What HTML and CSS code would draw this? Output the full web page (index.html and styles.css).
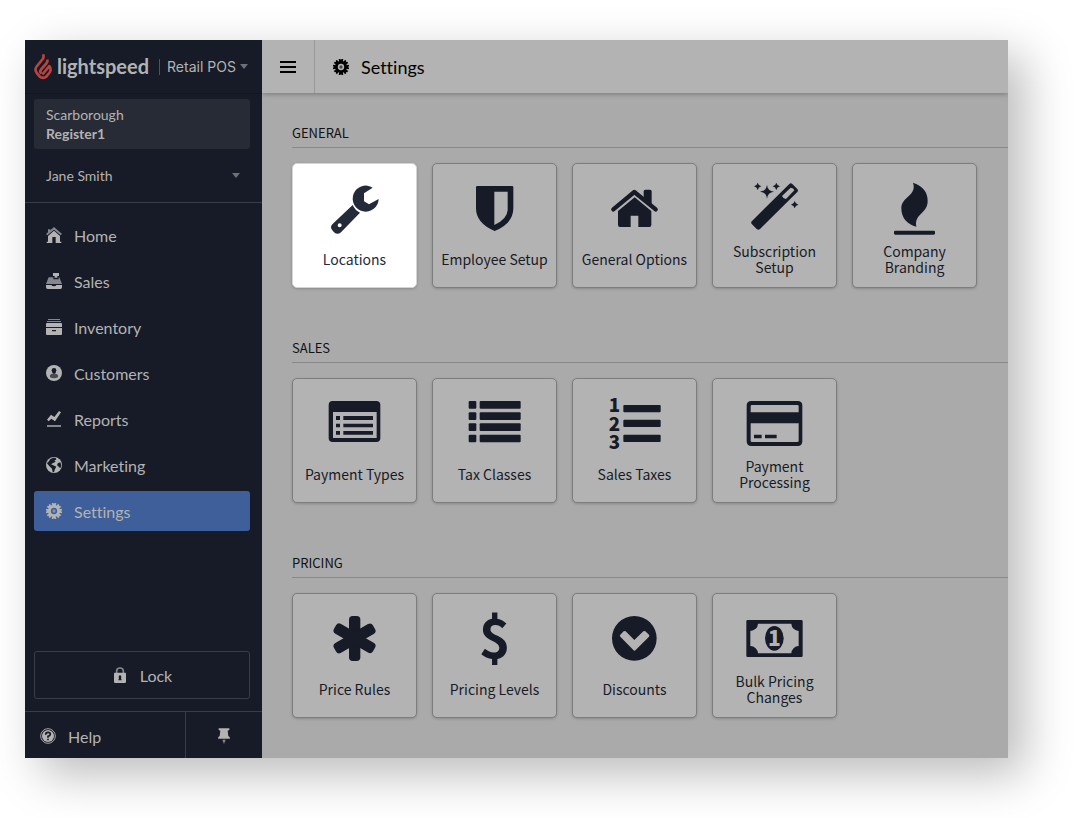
FILE: index.html
```html
<!DOCTYPE html>
<html lang="en">
<head>
<meta charset="utf-8">
<title>Settings</title>
<link rel="stylesheet" href="styles.css">
</head>
<body>
<svg class="defs" aria-hidden="true">
  <symbol id="gear" viewBox="0 0 48 48">
    <circle cx="24" cy="24" r="14" fill="none" stroke="currentColor" stroke-width="9"/>
    <circle cx="24" cy="24" r="5" opacity=".6"/>
    <path d="M19 8L17 0H22L24 3L26 0H31L29 8ZM19 40L17 48H22L24 45L26 48H31L29 40Z"/>
    <path d="M19 8L17 0H22L24 3L26 0H31L29 8ZM19 40L17 48H22L24 45L26 48H31L29 40Z" transform="rotate(45 24 24)"/>
    <path d="M19 8L17 0H22L24 3L26 0H31L29 8ZM19 40L17 48H22L24 45L26 48H31L29 40Z" transform="rotate(90 24 24)"/>
    <path d="M19 8L17 0H22L24 3L26 0H31L29 8ZM19 40L17 48H22L24 45L26 48H31L29 40Z" transform="rotate(135 24 24)"/>
  </symbol>
</svg>
<div class="app">
  <aside class="sidebar">
    <div class="brand">
      <svg class="brand-mark" viewBox="0 0 54 80" aria-hidden="true"><g fill="none" stroke="#b9443f" stroke-width="8" stroke-linejoin="round"><path d="M27 3Q31 12 25 19L8 40Q1 49 8 59L16 69Q27 79 38 69L47 58Q53 48 46 39L25 64"/><path d="M40 19Q42 26 37 31L21 49Q16 55 22 61"/></g></svg>
      <span class="brand-name">lightspeed</span>
      <button class="product" type="button">Retail POS<span class="caret"></span></button>
    </div>
    <div class="register"><span>Scarborough</span><strong>Register1</strong></div>
    <button class="user" type="button">Jane Smith<span class="caret"></span></button>
    <nav class="nav">
      <a href="#"><svg viewBox="0 0 48 48"><path fill="#85878b" d="M24 0L48 21L44 25L24 8L4 25L0 21L6 16V7H13V10Z"/><path d="M24 11L42 27V44H46V48H29V30H19V48H2V44H6V27Z"/></svg>Home</a>
      <a href="#"><svg viewBox="0 0 48 48"><path d="M21 0H39V9H34V14H26V9H21ZM0 36H16Q18 40 24 40T31 36H48V43Q48 48 43 48H5Q0 48 0 43Z"/><path fill="#85878b" d="M8 13H22V19H38V13H40L48 33H0Z"/></svg>Sales</a>
      <a href="#"><svg viewBox="0 0 48 48"><path fill="#85878b" d="M6 0H42V3H6ZM3 6H45V9H3Z"/><path fill-rule="evenodd" d="M3 12H45Q48 12 48 15V24H0V15Q0 12 3 12ZM0 27H48V45Q48 48 45 48H3Q0 48 0 45ZM18 33V37H30V33Z"/></svg>Inventory</a>
      <a href="#"><svg viewBox="0 0 48 48"><circle cx="24" cy="24" r="24"/><path fill="#484b54" d="M12 37Q10 29 15 28L20 26H28L33 28Q38 29 36 37Q24 43 12 37Z"/><path fill="#171b27" d="M24 9Q31 9 31 16Q31 24 24 27Q17 24 17 16Q17 9 24 9Z"/></svg>Customers</a>
      <a href="#"><svg viewBox="0 0 48 48"><path d="M3 26L15 11L25 18L39 0L45 4L27 31L16 23L8 31Z"/><path fill="#85878b" d="M3 42H45V48H3Z"/></svg>Reports</a>
      <a href="#"><svg viewBox="0 0 48 48"><circle cx="24" cy="24" r="24"/><path fill="#171b27" d="M22 2L29 3L31 8L25 10L29 14L20 19L15 22L22 25L31 29L27 36L24 46L20 45L18 35L12 29L5 22L3 18L9 13L12 7ZM36 18L43 16L46 25L43 34L38 29L33 24Z"/></svg>Marketing</a>
      <a href="#" class="active" aria-current="page"><svg><use href="#gear"/></svg>Settings</a>
    </nav>
    <button class="lock" type="button"><svg viewBox="0 0 48 48"><path fill="none" stroke="#85878b" stroke-width="5" d="M14 20V12Q14 3 24 3T34 12V20"/><path fill-rule="evenodd" d="M8 17H40Q42 17 42 20V44Q42 48 38 48H10Q6 48 6 44V20Q6 17 8 17ZM24 25A5 5 0 0 0 21 33L19 40H29L27 33A5 5 0 0 0 24 25"/></svg>Lock</button>
    <div class="sidebar-foot">
      <a class="help" href="#"><svg viewBox="0 0 48 48"><circle cx="24" cy="24" r="22" fill="none" stroke="#a4a5a8" stroke-width="3"/><circle cx="24" cy="24" r="18"/><path fill="none" stroke="#171b27" stroke-width="5" d="M17 20Q17 13 24 13T31 19Q31 23 24 25V29M24 32V37"/></svg>Help</a>
      <button class="pin" type="button" aria-label="Pin menu"><svg viewBox="0 0 48 48"><path d="M8 1H40V6L35 8L37 24Q42 26 42 32H6Q6 26 11 24L13 8L8 6Z"/><path fill="#85878b" d="M19 35H29L24 48Z"/></svg></button>
    </div>
  </aside>
  <div class="main">
    <header class="topbar">
      <button class="menu" type="button" aria-label="Menu"><svg viewBox="0 0 48 48"><path d="M0 6H48V12H0ZM0 21H48V27H0ZM0 36H48V42H0Z"/></svg></button>
      <h1><svg><use href="#gear"/></svg>Settings</h1>
    </header>
    <main class="content">
      <section>
        <h2>GENERAL</h2>
        <div class="cards">
          <a class="card highlight" href="#"><svg viewBox="123 78 171 168"><path fill-rule="evenodd" d="M263 98L237 115V139L252 148L281 132A39 39 0 1 1 263 98ZM203 150Q210 166 225 173L168 232Q158 241 147 232L142 226Q134 216 142 208ZM164 205A6 6 0 1 0 164 217A6 6 0 1 0 164 205"/></svg><span>Locations</span></a>
          <a class="card" href="#"><svg viewBox="543 78 171 168"><path fill-rule="evenodd" d="M577 93H681Q685 93 685 97V160Q685 205 629 228Q573 205 573 160V97Q573 93 577 93ZM628 110V210Q667 192 668 165V110Z"/></svg><span>Employee Setup</span></a>
          <a class="card" href="#"><svg viewBox="123 78 171 168"><path d="M236 109Q236 104 241 104H255Q260 104 260 109V152L236 132ZM209 127L259 168V210Q259 216 253 216H220V182H197V216H165Q159 216 159 210V168Z"/><path fill="none" stroke="#171b27" stroke-width="13" stroke-linecap="round" stroke-linejoin="round" d="M145 163L208 111L272 163"/></svg><span>General Options</span></a>
          <a class="card" href="#"><svg viewBox="543 78 171 168"><path fill-rule="evenodd" d="M673 87Q677 83 682 87L697 102Q701 107 697 111L585 222Q580 227 575 222L561 208Q556 203 561 198ZM677 98L651 123Q655 132 663 132L688 106Q686 99 677 98Z"/><path d="M606 89Q608 108 627 110Q608 112 606 131Q604 112 585 110Q604 108 606 89ZM578 83Q580 92 589 94Q580 96 578 105Q576 96 567 94Q576 92 578 83ZM634 83Q636 92 645 94Q636 96 634 105Q632 96 623 94Q632 92 634 83ZM689 138Q691 147 700 149Q691 151 689 160Q687 151 678 149Q687 147 689 138Z"/></svg><span>Subscription<br>Setup</span></a>
          <a class="card" href="#"><svg viewBox="123 78 171 168"><path d="M204 83C236 94 248 113 248 138C248 177 207 175 214 215C188 209 169 190 169 160C169 124 217 122 204 83Z"/><rect x="147" y="227" width="123" height="12" rx="4"/></svg><span>Company<br>Branding</span></a>
        </div>
      </section>
      <section>
        <h2>SALES</h2>
        <div class="cards">
          <a class="card" href="#"><svg viewBox="123 78 171 168"><path fill-rule="evenodd" d="M143 93H274Q286 93 286 105V204Q286 216 274 216H143Q131 216 131 204V105Q131 93 143 93ZM144 126V204H275V126Z"/><path d="M153 138H165V150H153ZM153 161H165V172H153ZM153 183H165V194H153ZM175 138H264V150H175ZM175 161H264V172H175ZM175 183H264V194H175Z"/></svg><span>Payment Types</span></a>
          <a class="card" href="#"><svg viewBox="543 78 171 168"><g><rect x="551" y="93" width="23" height="23" rx="3"/><rect x="551" y="127" width="23" height="23" rx="3"/><rect x="551" y="160" width="23" height="23" rx="3"/><rect x="551" y="194" width="23" height="23" rx="3"/><rect x="584" y="93" width="123" height="23" rx="3"/><rect x="584" y="127" width="123" height="23" rx="3"/><rect x="584" y="160" width="123" height="23" rx="3"/><rect x="584" y="194" width="123" height="23" rx="3"/></g></svg><span>Tax Classes</span></a>
          <a class="card" href="#"><svg viewBox="123 78 171 168"><g class="digits"><text x="148" y="126">1</text><text x="148" y="182">2</text><text x="148" y="237">3</text></g><rect x="175" y="105" width="112" height="22" rx="3"/><rect x="175" y="149" width="112" height="22" rx="3"/><rect x="175" y="194" width="112" height="22" rx="3"/></svg><span>Sales Taxes</span></a>
          <a class="card" href="#"><svg viewBox="543 78 171 168"><path fill-rule="evenodd" d="M559 93H698Q712 93 712 107V214Q712 228 698 228H559Q545 228 545 214V107Q545 93 559 93ZM561 105Q557 105 557 109V127H701V109Q701 105 697 105ZM557 160V212Q557 216 561 216H697Q701 216 701 212V160ZM567 194H590V205H567ZM600 194H635V205H600Z"/></svg><span>Payment<br>Processing</span></a>
        </div>
      </section>
      <section>
        <h2>PRICING</h2>
        <div class="cards">
          <a class="card" href="#"><svg viewBox="123 78 171 168"><rect x="192" y="93" width="34" height="135" rx="11"/><rect x="192" y="93" width="34" height="135" rx="11" transform="rotate(60 209 160)"/><rect x="192" y="93" width="34" height="135" rx="11" transform="rotate(120 209 160)"/></svg><span>Price Rules</span></a>
          <a class="card" href="#"><svg viewBox="543 78 171 168"><text class="dollar" x="629" y="218">$</text></svg><span>Pricing Levels</span></a>
          <a class="card" href="#"><svg viewBox="123 78 171 168"><path fill-rule="evenodd" d="M208 93A67 67 0 1 0 208 227A67 67 0 1 0 208 93ZM166 149L176 139Q179 137 182 139L208 165L235 139Q238 137 241 139L252 149Q254 152 252 155L212 195Q208 199 205 195L166 155Q163 152 166 149Z"/></svg><span>Discounts</span></a>
          <a class="card" href="#"><svg viewBox="543 78 171 168"><path fill-rule="evenodd" d="M548 105H709Q713 105 713 109V212Q713 216 709 216H548Q544 216 544 212V109Q544 105 548 105ZM579 116A23 23 0 0 1 556 138V183A23 23 0 0 1 579 205H679A23 23 0 0 1 701 183V138A23 23 0 0 1 679 116Z"/><ellipse cx="628" cy="160" rx="28" ry="37"/><text class="note-one" x="628" y="183">1</text></svg><span>Bulk Pricing<br>Changes</span></a>
        </div>
      </section>
    </main>
  </div>
</div>
</body>
</html>
```
FILE: styles.css
```css
* { box-sizing: border-box; }
body {
  margin: 0;
  padding: 40px 75px 60px 25px;
  min-height: 100vh;
  display: flex;
  background: #fff;
  font-family: Lato, sans-serif;
  font-variant-ligatures: none;
}
button {
  font: inherit;
  color: inherit;
  background: none;
  border: 0;
  padding: 0;
  cursor: pointer;
}
a { color: inherit; text-decoration: none; }
.defs { display: none; }
.app {
  flex: 1;
  display: flex;
  min-width: 0;
  box-shadow: 16px 16px 44px rgba(0, 0, 0, .27);
}

.sidebar {
  width: 237px;
  flex: none;
  display: flex;
  flex-direction: column;
  background: #171b27;
  color: #b3b3b3;
  font-size: 16px;
}
.sidebar svg, .topbar svg { width: 16px; height: 16px; flex: none; fill: currentColor; }
.brand {
  height: 54px;
  display: flex;
  align-items: center;
  padding: 0 12px 0 9px;
  border-bottom: 1px solid #121620;
}
.sidebar .brand-mark { width: 18px; height: 27px; }
.brand-name { margin-left: 5px; font-size: 20px; font-weight: 700; line-height: 24px; padding-bottom: 2px; }
.product {
  margin-left: 10px;
  padding-left: 7px;
  border-left: 1px solid #93393a;
  display: flex;
  align-items: center;
  gap: 4px;
  font: 14px/16px Inter, sans-serif;
  white-space: nowrap;
}
.caret {
  border: 4px solid transparent;
  border-top: 5px solid #6e7076;
  border-bottom: 0;
}
.register {
  margin: 5px 12px 0 9px;
  height: 50px;
  padding: 6px 12px;
  border-radius: 3px;
  background: #272b35;
  display: flex;
  flex-direction: column;
  font-size: 14px;
  line-height: 19px;
}
.user {
  height: 54px;
  padding: 0 22px 0 21px;
  display: flex;
  align-items: center;
  justify-content: space-between;
  border-bottom: 1px solid #3a3d47;
  font-size: 14px;
}
.nav {
  display: flex;
  flex-direction: column;
  gap: 6px;
  padding: 12px 12px 0 9px;
}
.nav a {
  height: 40px;
  padding: 0 12px;
  display: flex;
  align-items: center;
  gap: 12px;
  border-radius: 3px;
}
.nav .active { background: #3e5f99; }
.lock {
  height: 48px;
  margin: auto 12px 12px 9px;
  display: flex;
  align-items: center;
  justify-content: center;
  gap: 12px;
  border: 1px solid #3a3d47;
  border-radius: 3px;
}
.sidebar-foot { height: 47px; display: flex; border-top: 1px solid #3a3d47; }
.help { width: 161px; display: flex; align-items: center; gap: 12px; padding: 2px 15px 0; border-right: 1px solid #3a3d47; }
.pin { flex: 1; display: flex; align-items: center; justify-content: center; padding-top: 2px; }

.main {
  flex: 1;
  min-width: 0;
  background: #aaa;
}
.topbar {
  height: 53px;
  display: flex;
  background: #b3b3b3;
  box-shadow: 0 1px 5px rgba(0, 0, 0, .3);
  clip-path: inset(0 0 -8px 0);
  color: #000;
}
.menu {
  width: 53px;
  border-right: 1px solid #999;
  display: flex;
  align-items: center;
  justify-content: center;
}
h1 {
  margin: 0;
  padding-left: 18px;
  display: flex;
  align-items: center;
  gap: 12px;
  font-size: 18px;
  font-weight: 400;
}
.content {
  padding: 30px 0 40px 30px;
  display: flex;
  flex-direction: column;
  gap: 50px;
  font-family: "Noto Sans CJK SC", sans-serif;
}
h2 {
  margin: 0 0 15px;
  height: 25px;
  border-bottom: 1px solid #888;
  font-size: 13px;
  line-height: 20px;
  font-weight: 400;
  color: #111;
}
.cards { display: flex; flex-wrap: wrap; gap: 15px; }
.card {
  width: 125px;
  height: 125px;
  padding-top: 17px;
  border: 1px solid #7b7e7d;
  border-radius: 5px;
  background: #b3b3b3;
  box-shadow: 0 1px 3px rgba(0, 0, 0, .2);
  color: #171b27;
  display: flex;
  flex-direction: column;
  align-items: center;
  font-size: 14px;
  line-height: 16px;
  text-align: center;
}
.card svg { width: 57px; height: 56px; flex: none; fill: currentColor; overflow: visible; }
.card span { height: 44px; display: flex; align-items: center; white-space: nowrap; }
.highlight { background: #fff; color: #252a3a; border-color: #d4d6d5; }
.digits, .dollar, .note-one { font-weight: 900; text-anchor: middle; }
.digits { font-size: 56px; }
.dollar { font-size: 162px; font-weight: 700; }
.note-one { font-size: 63px; fill: #b3b3b3; }
```
